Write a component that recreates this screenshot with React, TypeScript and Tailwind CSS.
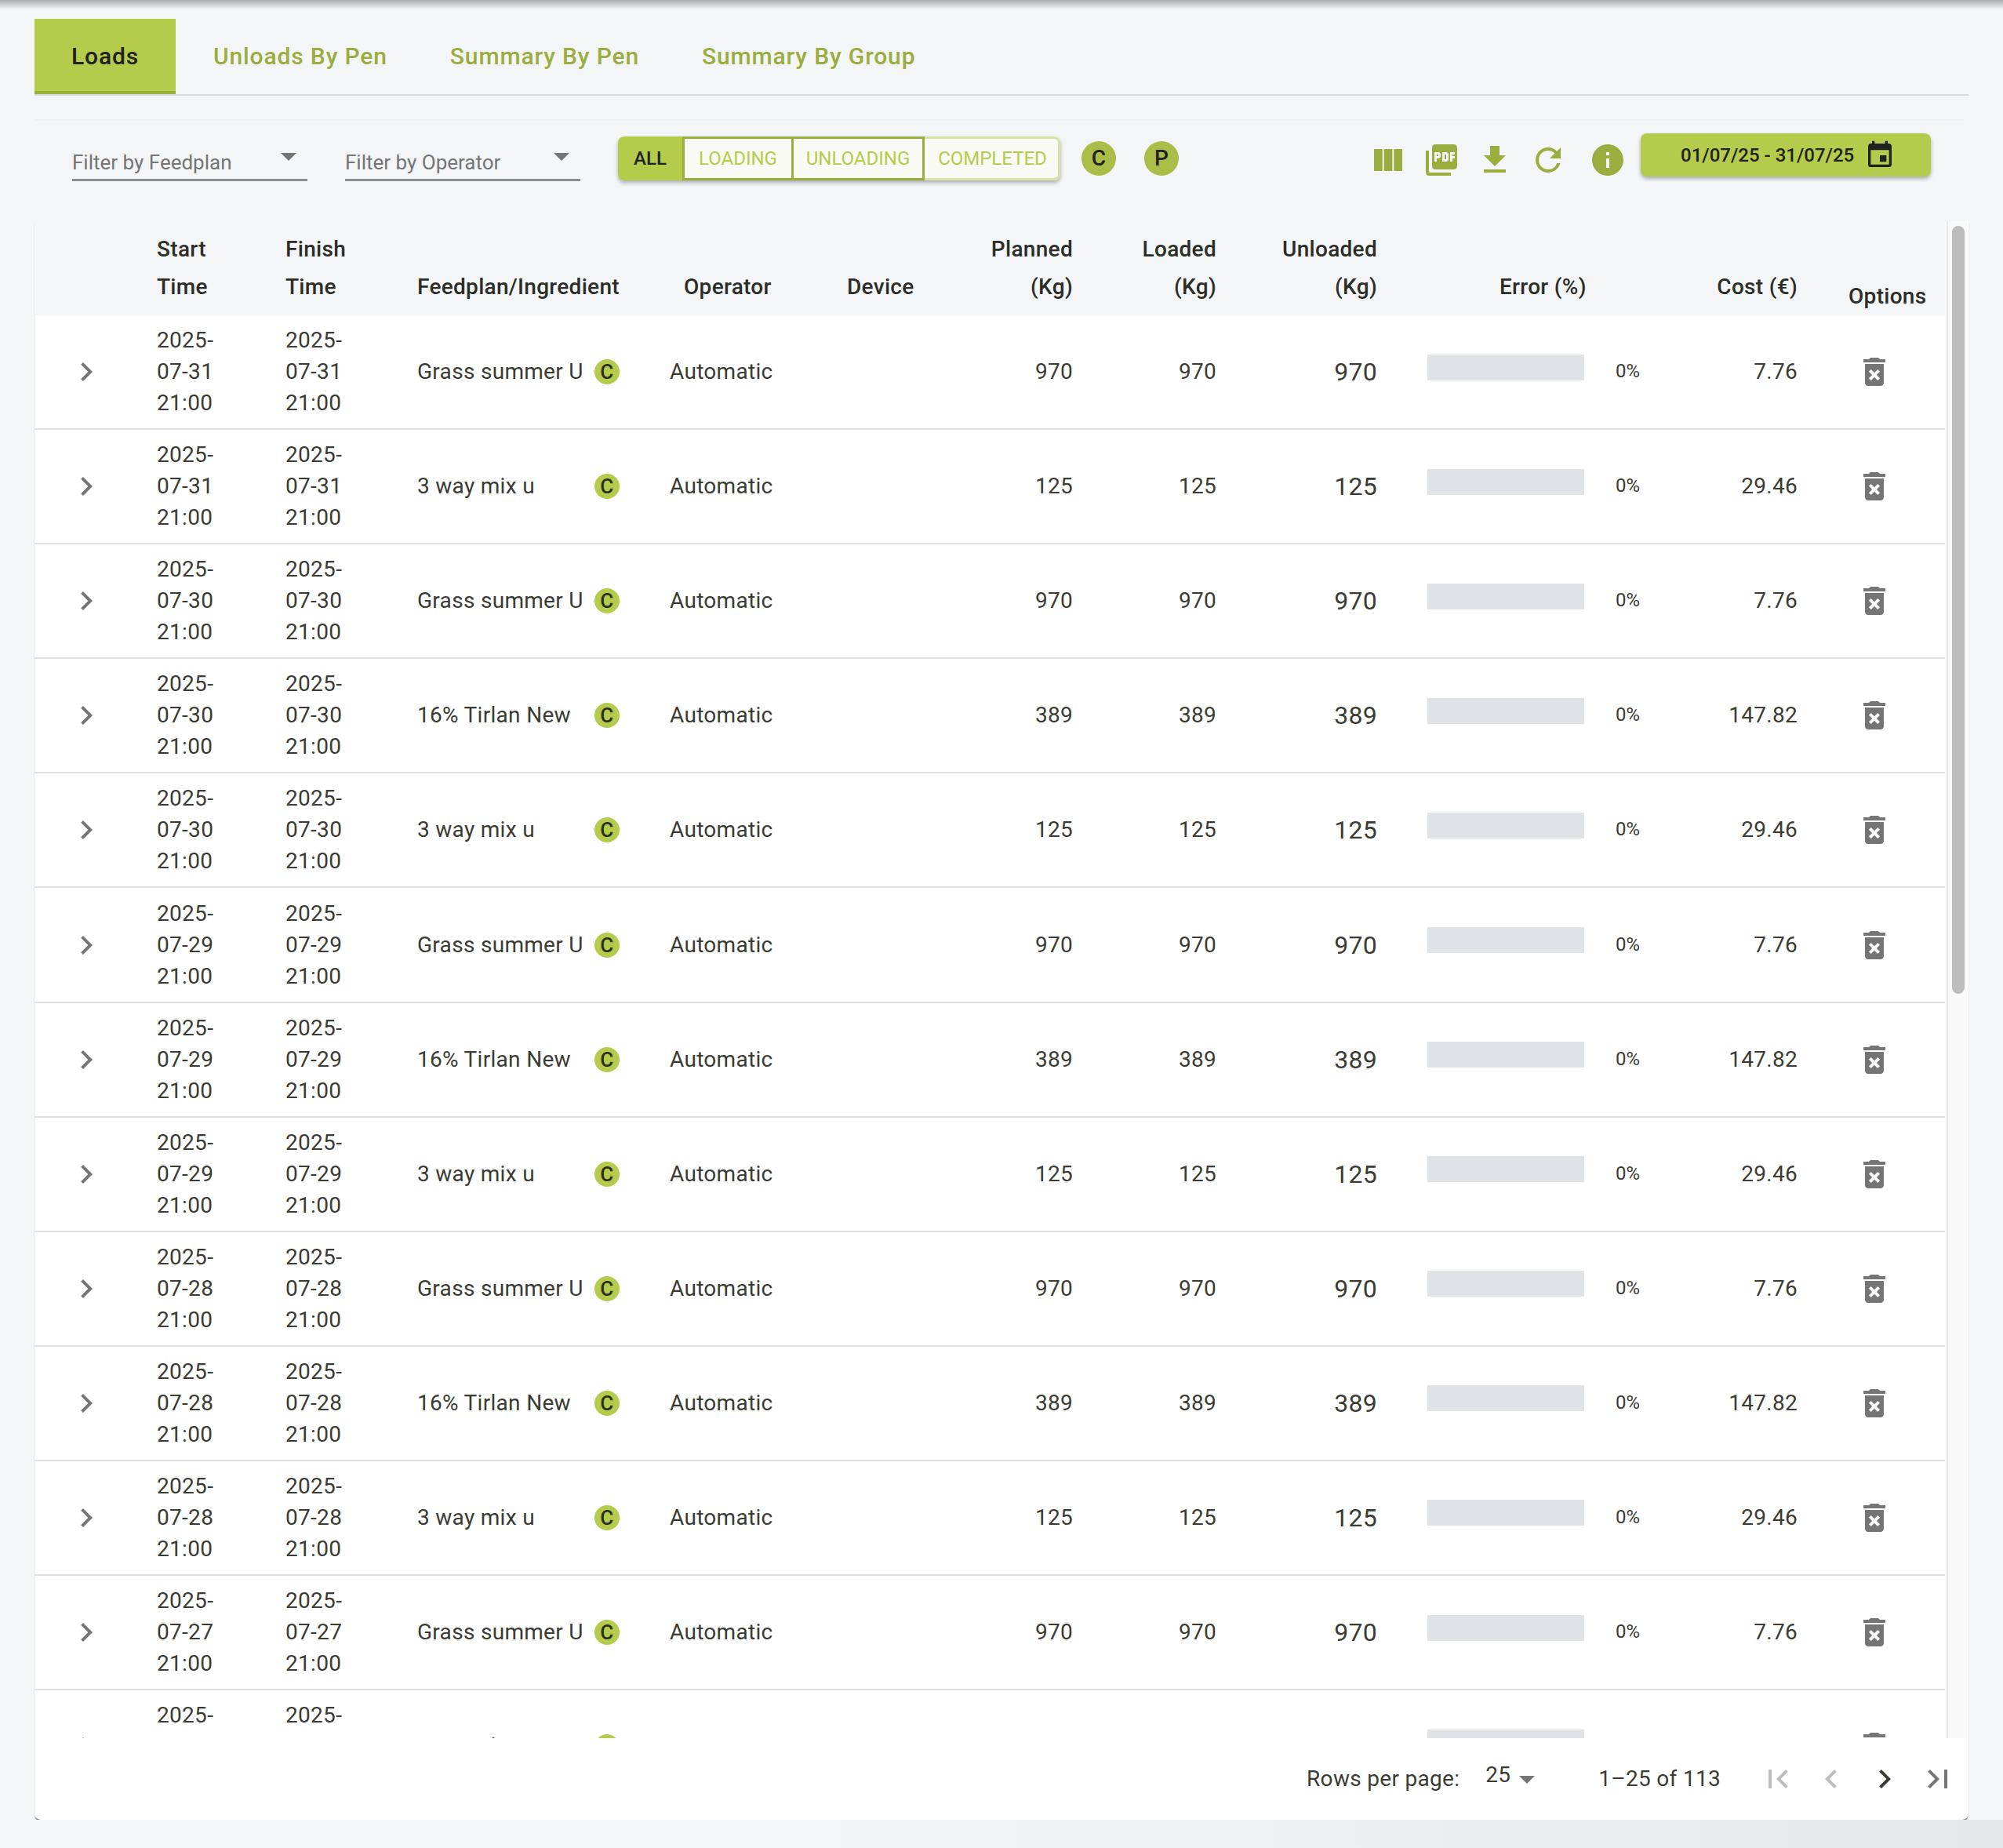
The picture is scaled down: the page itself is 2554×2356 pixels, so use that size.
import React from "react";
import {
  MdArrowDropDown,
  MdChevronLeft,
  MdChevronRight,
  MdDeleteForever,
  MdEvent,
  MdFileDownload,
  MdFirstPage,
  MdInfo,
  MdLastPage,
  MdPictureAsPdf,
  MdRefresh,
  MdViewColumn,
} from "react-icons/md";

const gridCols =
  "grid grid-cols-[132px_164px_168px_322px_220px_150px_168px_183px_205px_344px_192px_188px]";

const rows = [
  { date: "2025-07-31 21:00", name: "Grass summer U", qty: "970", cost: "7.76" },
  { date: "2025-07-31 21:00", name: "3 way mix u", qty: "125", cost: "29.46" },
  { date: "2025-07-30 21:00", name: "Grass summer U", qty: "970", cost: "7.76" },
  { date: "2025-07-30 21:00", name: "16% Tirlan New", qty: "389", cost: "147.82" },
  { date: "2025-07-30 21:00", name: "3 way mix u", qty: "125", cost: "29.46" },
  { date: "2025-07-29 21:00", name: "Grass summer U", qty: "970", cost: "7.76" },
  { date: "2025-07-29 21:00", name: "16% Tirlan New", qty: "389", cost: "147.82" },
  { date: "2025-07-29 21:00", name: "3 way mix u", qty: "125", cost: "29.46" },
  { date: "2025-07-28 21:00", name: "Grass summer U", qty: "970", cost: "7.76" },
  { date: "2025-07-28 21:00", name: "16% Tirlan New", qty: "389", cost: "147.82" },
  { date: "2025-07-28 21:00", name: "3 way mix u", qty: "125", cost: "29.46" },
  { date: "2025-07-27 21:00", name: "Grass summer U", qty: "970", cost: "7.76" },
  { date: "2025-07-27 21:00", name: "16% Tirlan New", qty: "389", cost: "147.82" },
];

function FilterSelect(props: { label: string }) {
  return (
    <div className="flex h-[61px] w-[300px] items-center justify-between border-b-[3px] border-[#8c8c8c] pt-[16px] text-[26px] text-[#757575]">
      <span>{props.label}</span>
      <MdArrowDropDown className="mb-[16px] text-[48px] text-[#757575]" />
    </div>
  );
}

function Row(props: { date: string; name: string; qty: string; cost: string }) {
  return (
    <div className={`${gridCols} h-[146.1px] items-center border-b-2 border-[#e0e0e0] bg-white text-[28px] leading-[40px] tracking-[0.3px] text-[#3a3b33]`}>
      <div className="flex justify-center">
        <MdChevronRight className="text-[48px] text-[#757575]" />
      </div>
      <div className="box-content w-[110px] pl-[24px]">{props.date}</div>
      <div className="box-content w-[110px] pl-[24px]">{props.date}</div>
      <div className="flex items-center pl-[24px]">
        <span className="w-[226px] whitespace-nowrap">{props.name}</span>
        <span className="flex h-[32px] w-[32px] items-center justify-center rounded-full bg-[#b5cb4c] text-[26px] font-medium text-[#2b2f1a]">
          C
        </span>
      </div>
      <div className="pl-[24px]">Automatic</div>
      <div />
      <div className="text-right">{props.qty}</div>
      <div className="text-right">{props.qty}</div>
      <div className="text-right text-[32px]">{props.qty}</div>
      <div className="flex items-center pl-[64px]">
        <div className="mb-[12px] h-[33px] w-[200px] bg-[#e0e3e5]" />
        <span className="mb-[2px] ml-[40px] text-[24px] tracking-normal">0%</span>
      </div>
      <div className="text-right">{props.cost}</div>
      <div className="pl-[74px]">
        <MdDeleteForever className="text-[48px] text-[#757575]" />
      </div>
    </div>
  );
}

export default function App() {
  return (
    <div className="h-[2356px] w-[2554px] overflow-hidden bg-[#f4f5f7] font-['Roboto',sans-serif]">
      <div className="h-[12px] bg-gradient-to-b from-[#a9abae] to-[#f4f5f7]" />

      {/* tabs */}
      <div className="mx-[44px] mt-[12px] flex h-[98px] w-[2466px] border-b-2 border-[#d9d9d9] text-[30px] font-medium tracking-[0.86px] text-[#9aad3e]">
        <div className="flex h-[96px] w-[180px] items-center justify-center border-b-4 border-[#9aad3e] bg-[#b5cb4c] pt-[2px] text-[#212121]">
          Loads
        </div>
        <div className="flex h-[96px] items-center pb-[2px] pl-[48px] pr-[40px]">Unloads By Pen</div>
        <div className="flex h-[96px] items-center px-[40px] pb-[2px]">Summary By Pen</div>
        <div className="flex h-[96px] items-center px-[40px] pb-[2px]">Summary By Group</div>
      </div>

      {/* toolbar */}
      <div className="mx-[44px] mt-[30px] flex h-[130px] w-[2460px] items-start border-t-2 border-[#eeeff1] pl-[48px]">
        <div className="mt-[16px] flex gap-[48px]">
          <FilterSelect label="Filter by Feedplan" />
          <FilterSelect label="Filter by Operator" />
        </div>

        <div className="ml-[48px] mt-[20px] flex h-[56px] rounded-[8px] text-[24px] shadow-[0_3px_5px_rgba(0,0,0,0.3)]">
          <div className="flex w-[82px] items-center justify-center rounded-l-[8px] bg-[#b5cb4c] font-medium text-[#212121]">ALL</div>
          <div className="flex w-[139px] items-center justify-center border-[3px] border-r-0 border-[#9aad3e] bg-[#f9faf3] text-[#b5cb4c]">LOADING</div>
          <div className="flex w-[170px] items-center justify-center border-[3px] border-[#9aad3e] bg-[#f9faf3] text-[#b5cb4c]">UNLOADING</div>
          <div className="flex w-[173px] items-center justify-center rounded-r-[8px] border-[3px] border-l-0 border-[#d8e3a6] bg-[#f9faf3] pl-[3px] text-[#b5cb4c]">COMPLETED</div>
        </div>

        <div className="ml-[27px] mt-[26px] flex h-[44px] w-[44px] items-center justify-center rounded-full bg-[#a9bd48] text-[28px] font-medium text-[#212121]">C</div>
        <div className="ml-[36px] mt-[26px] flex h-[44px] w-[44px] items-center justify-center rounded-full bg-[#a9bd48] text-[28px] font-medium text-[#212121]">P</div>

        <div className="ml-[243px] mt-[26px] flex items-center gap-[20px] text-[48px] text-[#9aad3e]">
          <MdViewColumn />
          <MdPictureAsPdf />
          <MdFileDownload />
          <MdRefresh />
          <MdInfo className="ml-[8px]" />
        </div>

        <div className="ml-[18px] mt-[16px] flex h-[55px] w-[370px] items-center rounded-[8px] bg-[#b5cb4c] pl-[51px] text-[24px] font-medium text-[#212121] shadow-[0_3px_5px_rgba(0,0,0,0.3)]">
          <span>01/07/25 - 31/07/25</span>
          <MdEvent className="ml-[13px] text-[40px]" />
        </div>
      </div>

      {/* table card */}
      <div className="ml-[44px] flex h-[2038px] w-[2466px] flex-col rounded-b-[8px] bg-white shadow-[0_3px_2px_-1px_rgba(0,0,0,0.65)]">
        <div className="flex h-[1934px] overflow-hidden">
          <div className="w-[2436px] shrink-0">
            <div className={`${gridCols} h-[120px] items-end bg-[#f4f5f7] pb-[12px] text-[28px] font-medium leading-[48px] tracking-[0.3px] text-[#2c2d28]`}>
              <div />
              <div className="box-content w-[110px] pl-[24px]">Start Time</div>
              <div className="box-content w-[110px] pl-[24px]">Finish Time</div>
              <div className="pl-[24px]">Feedplan/Ingredient</div>
              <div className="pl-[42px]">Operator</div>
              <div className="pl-[30px]">Device</div>
              <div className="ml-auto max-w-[140px] text-right">Planned (Kg)</div>
              <div className="ml-auto max-w-[140px] text-right">Loaded (Kg)</div>
              <div className="ml-auto max-w-[140px] text-right">Unloaded (Kg)</div>
              <div className="pl-[156px]">Error (%)</div>
              <div className="text-right">Cost (€)</div>
              <div className="-mb-3 pl-[65px]">Options</div>
            </div>
            {rows.map((r, i) => (
              <Row key={i} date={r.date} name={r.name} qty={r.qty} cost={r.cost} />
            ))}
          </div>
          <div className="ml-[2px] w-[26px] shrink-0 border-l-2 border-[#e8e8e8] bg-[#f9f9f9] px-[5px] pt-[6px]">
            <div className="h-[979px] w-[16px] rounded-full bg-[#bdbdbd]" />
          </div>
        </div>

        {/* pagination */}
        <div className="flex h-[104px] items-center justify-end pr-[15px] text-[28px] tracking-[0.3px] text-[#3a3b33]">
          <span>Rows per page:</span>
          <span className="-mr-[3px] mb-[10px] ml-[33px]">25</span>
          <MdArrowDropDown className="text-[48px] text-[#757575]" />
          <span className="ml-[67px] mr-[49px]">1–25 of 113</span>
          <div className="flex gap-[20px] text-[48px]">
            <MdFirstPage className="text-[#bdbdbd]" />
            <MdChevronLeft className="text-[#bdbdbd]" />
            <MdChevronRight className="text-[#3a3b33]" />
            <MdLastPage className="text-[#757575]" />
          </div>
        </div>
      </div>

      <div className="h-[36px] bg-gradient-to-r from-[#f4f5f7] from-40% to-[#e6e7e9]" />
    </div>
  );
}
